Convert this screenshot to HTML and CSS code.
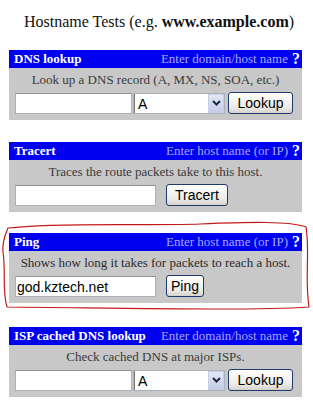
FILE: index.html
```html
<!DOCTYPE html>
<html lang="en">
<head>
    <meta charset="UTF-8">
    <meta name="viewport" content="width=device-width, initial-scale=1.0">
    <title>Hostname Tests</title>
    <link rel="stylesheet" href="styles.css">
</head>
<body>
    <div class="title">Hostname Tests (e.g. <b>www.example.com</b>)</div>

    <div class="panel">
        <div class="head">
            <span class="name">DNS lookup</span>
            <span class="hint">Enter domain/host name <span class="help">?</span></span>
        </div>
        <div class="body">
            <div class="desc">Look up a DNS record (A, MX, NS, SOA, etc.)</div>
            <div class="row">
                <input type="text" class="host short">
                <div class="select">
                    <span class="value">A</span>
                    <span class="arrow"><svg width="9" height="6" viewBox="0 0 9 6"><path d="M1 1 L4.5 4.5 L8 1" fill="none" stroke="#1b2a4a" stroke-width="2"/></svg></span>
                </div>
                <button class="btn lookup">Lookup</button>
            </div>
        </div>
    </div>

    <div class="panel">
        <div class="head">
            <span class="name">Tracert</span>
            <span class="hint">Enter host name (or IP) <span class="help">?</span></span>
        </div>
        <div class="body">
            <div class="desc">Traces the route packets take to this host.</div>
            <div class="row">
                <input type="text" class="host long">
                <button class="btn tracert">Tracert</button>
            </div>
        </div>
    </div>

    <div class="panel ping">
        <div class="head">
            <span class="name">Ping</span>
            <span class="hint">Enter host name (or IP) <span class="help">?</span></span>
        </div>
        <div class="body">
            <div class="desc dark">Shows how long it takes for packets to reach a host.</div>
            <div class="row">
                <input type="text" class="host long" value="god.kztech.net">
                <button class="btn pingbtn">Ping</button>
            </div>
        </div>
    </div>

    <div class="panel">
        <div class="head">
            <span class="name">ISP cached DNS lookup</span>
            <span class="hint">Enter domain/host name <span class="help">?</span></span>
        </div>
        <div class="body">
            <div class="desc">Check cached DNS at major ISPs.</div>
            <div class="row">
                <input type="text" class="host short">
                <div class="select">
                    <span class="value">A</span>
                    <span class="arrow"><svg width="9" height="6" viewBox="0 0 9 6"><path d="M1 1 L4.5 4.5 L8 1" fill="none" stroke="#1b2a4a" stroke-width="2"/></svg></span>
                </div>
                <button class="btn lookup">Lookup</button>
            </div>
        </div>
    </div>

    <!-- hand drawn circle around the ping box -->
    <svg class="scribble" width="313" height="419" viewBox="0 0 313 419">
        <path d="M8 228 C60 222 150 226 200 224 S290 221 306 227 L307 236 C309 260 305 282 309 307 C250 311 120 308 7 307 C2 292 6 272 3 252 C2 240 6 233 8 228 Z" fill="none" stroke="#c41818" stroke-width="1.2"/>
    </svg>
</body>
</html>
```

FILE: styles.css
```css
*{
    margin: 0;
    padding: 0;
    box-sizing: border-box;
}

body{
    width: 313px;
    height: 419px;
    position: relative;
    background: #fff;
    font-family: "Liberation Serif", "Times New Roman", serif;
    overflow: hidden;
}

.title{
    margin-top: 12px;
    height: 20px;
    line-height: 20px;
    font-size: 16px;
    text-align: center;
    color: #111;
    padding-left: 5px;
}

.panel{
    width: 293px;
    margin: 18px 0 0 9px;
}

.panel + .panel{
    margin-top: 22px;
}

.panel.ping{
    margin-top: 21px;
}

.panel.ping + .panel{
    margin-top: 24px;
}

.head{
    height: 18px;
    background: #0000f0;
    display: flex;
    justify-content: space-between;
    align-items: center;
    padding: 0 2px 0 5px;
    font-size: 13px;
    line-height: 18px;
}

.name{
    color: #fff;
    font-weight: bold;
}

.hint{
    color: #a8a8ff;
    display: flex;
    align-items: center;
    gap: 4px;
}

.help{
    color: #fff;
    font-weight: bold;
    font-size: 16px;
}

.body{
    background: #c8c8c8;
    padding: 2px 6px 6px 6px;
}

.desc{
    text-align: center;
    font-size: 13px;
    line-height: 20px;
    color: #3a3a3a;
}

.desc.dark{
    color: #2a2a2a;
}

.row{
    display: flex;
    align-items: center;
    height: 22px;
    margin-top: 2px;
}

.host{
    height: 21px;
    border: 1px solid #a9b1bb;
    border-top-color: #8a929c;
    background: #fff;
    font-family: "Liberation Sans", Arial, sans-serif;
    font-size: 14px;
    padding: 1px 1px 0 1px;
    color: #000;
    outline: none;
}

.host.short{
    width: 117px;
}

.host.long{
    width: 141px;
    margin-right: 10px;
}

.select{
    width: 92px;
    height: 21px;
    margin-left: 1px;
    border: 1px solid #a9b1bb;
    background: #fff;
    display: flex;
    align-items: stretch;
}

.value{
    flex: 1;
    font-family: "Liberation Sans", Arial, sans-serif;
    font-size: 14px;
    line-height: 21px;
    padding-left: 3px;
    border-left: 1px solid #7a7a7a;
}

.arrow{
    width: 16px;
    background: linear-gradient(#e4e8f6, #c3cbe6);
    border: 1px solid #c6cde4;
    display: flex;
    align-items: center;
    justify-content: center;
}

.btn{
    height: 22px;
    border: 1px solid #1f3b6b;
    border-radius: 3px;
    background: linear-gradient(#ffffff, #ecebe6 70%, #d6d3cc);
    font-family: "Liberation Sans", Arial, sans-serif;
    font-size: 14px;
    color: #000;
    cursor: pointer;
}

.lookup{
    width: 65px;
    margin-left: 3px;
}

.tracert{
    width: 62px;
}

.pingbtn{
    width: 38px;
}

.scribble{
    position: absolute;
    left: 0;
    top: 0;
    pointer-events: none;
}
```
